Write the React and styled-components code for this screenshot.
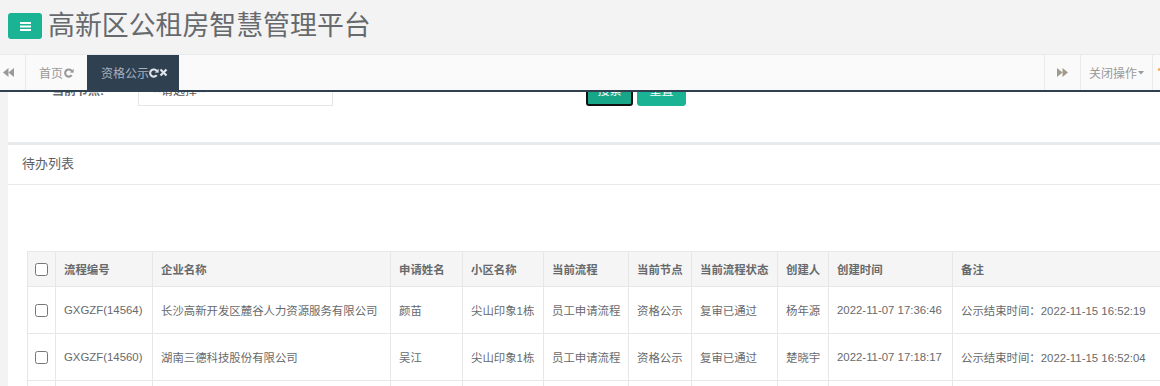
import React, { useLayoutEffect, useRef } from "react";
import styled, { createGlobalStyle } from "styled-components";

const GlobalStyle = createGlobalStyle`
  html, body { margin: 0; padding: 0; height: 100%; }
  body {
    background: #f3f3f4;
    font-family: "Liberation Sans", "Noto Sans CJK SC", sans-serif;
    color: #676a6c;
    overflow: hidden;
  }
  #root { height: 100%; }
  * { box-sizing: border-box; }
`;

const columns = [
  { key: "check", title: "", width: 28 },
  { key: "no", title: "流程编号", width: 97 },
  { key: "company", title: "企业名称", width: 238 },
  { key: "name", title: "申请姓名", width: 72 },
  { key: "estate", title: "小区名称", width: 81 },
  { key: "flow", title: "当前流程", width: 85 },
  { key: "node", title: "当前节点", width: 63 },
  { key: "status", title: "当前流程状态", width: 86 },
  { key: "creator", title: "创建人", width: 51 },
  { key: "time", title: "创建时间", width: 124 },
  { key: "memo", title: "备注", width: 240 },
];

const tableWidth = columns.reduce((sum, c) => sum + c.width, 0);

const rows = [
  {
    no: "GXGZF(14564)",
    company: "长沙高新开发区麓谷人力资源服务有限公司",
    name: "颜苗",
    estate: "尖山印象1栋",
    flow: "员工申请流程",
    node: "资格公示",
    status: "复审已通过",
    creator: "杨年源",
    time: "2022-11-07 17:36:46",
    memo: "公示结束时间：2022-11-15 16:52:19",
  },
  {
    no: "GXGZF(14560)",
    company: "湖南三德科技股份有限公司",
    name: "吴江",
    estate: "尖山印象1栋",
    flow: "员工申请流程",
    node: "资格公示",
    status: "复审已通过",
    creator: "楚晓宇",
    time: "2022-11-07 17:18:17",
    memo: "公示结束时间：2022-11-15 16:52:04",
  },
  {
    no: "", company: "", name: "", estate: "", flow: "", node: "", status: "", creator: "", time: "", memo: "",
  },
];

/* icons */
const Bars = () => (
  <svg width="11" height="9" viewBox="0 0 11 9">
    <rect x="0" y="0" width="11" height="2" fill="#fff" />
    <rect x="0" y="3.5" width="11" height="2" fill="#fff" />
    <rect x="0" y="7" width="11" height="2" fill="#fff" />
  </svg>
);

const Backward = () => (
  <svg width="11" height="9" viewBox="0 0 11 9">
    <polygon points="5.5,0 5.5,9 0,4.5" fill="#999" />
    <polygon points="11,0 11,9 5.5,4.5" fill="#999" />
  </svg>
);

const Forward = () => (
  <svg width="11" height="9" viewBox="0 0 11 9">
    <polygon points="0,0 0,9 5.5,4.5" fill="#a39a8e" />
    <polygon points="5.5,0 5.5,9 11,4.5" fill="#a39a8e" />
  </svg>
);

const Refresh = ({ color }) => (
  <svg width="10" height="10" viewBox="0 0 10 10">
    <path d="M7.7 3 A3.6 3.6 0 1 0 7.7 7.1" fill="none" stroke={color} strokeWidth="2.1" />
    <polygon points="9.6,0.8 9.6,4.8 5.8,4.4" fill={color} />
  </svg>
);

const Close = ({ color }) => (
  <svg width="9" height="9" viewBox="0 0 9 9">
    <path d="M1.5 1.5 L7.5 7.5 M7.5 1.5 L1.5 7.5" stroke={color} strokeWidth="2.3" />
  </svg>
);

const Caret = ({ color }) => (
  <svg width="6" height="4" viewBox="0 0 6 4">
    <polygon points="0,0 6,0 3,3.5" fill={color} />
  </svg>
);

/* layout */
const Shell = styled.div`
  height: 100vh;
  display: flex;
  flex-direction: column;
`;

const TopBar = styled.header`
  height: 54px;
  flex-shrink: 0;
  display: flex;
  align-items: center;
  gap: 6px;
  padding: 0 8px 2px;
`;

const MenuButton = styled.button`
  width: 34px;
  height: 26px;
  border: none;
  border-radius: 3px;
  background: #1ab394;
  display: flex;
  align-items: center;
  justify-content: center;
  padding: 0;
`;

const Title = styled.h1`
  margin: 0 0 3px;
  font-size: 26.9px;
  font-weight: normal;
  line-height: 1;
  color: #676a6c;
  font-family: "Noto Sans CJK SC", sans-serif;
`;

const TabBar = styled.nav`
  height: 38px;
  flex-shrink: 0;
  display: flex;
  background: #fafafa;
  border-top: 1px solid #e7eaec;
  border-bottom: 2px solid #2f4050;
  font-size: 12px;
  overflow: hidden;
`;

const NavButton = styled.div`
  width: ${(p) => p.$w}px;
  flex-shrink: 0;
  display: flex;
  align-items: center;
  justify-content: ${(p) => (p.$left ? "flex-start" : "center")};
  padding-left: ${(p) => p.$pad || 0}px;
  border-${(p) => (p.$side === "right" ? "right" : "left")}: 1px solid #eaeaea;
  color: #999;
  gap: 1px;
  overflow: hidden;
  white-space: nowrap;
`;

const TabList = styled.div`
  flex: 1;
  display: flex;
  min-width: 0;
`;

const Tab = styled.div`
  display: flex;
  align-items: center;
  gap: ${(p) => (p.$active ? 0 : 1)}px;
  padding: ${(p) => (p.$active ? "0 11px 0 14px" : "0 13px")};
  background: ${(p) => (p.$active ? "#2f4050" : "transparent")};
  color: ${(p) => (p.$active ? "#a7b1c2" : "#999")};
  white-space: nowrap;
`;

const Frame = styled.main`
  flex: 1;
  overflow: hidden;
`;

const Page = styled.div`
  padding-left: 8px;
  width: 1260px;
`;

const FilterBox = styled.section`
  background: #fff;
  padding: 20px 0 36px;
  display: flex;
  align-items: center;
  font-size: 12px;
`;

const FieldLabel = styled.label`
  width: 130px;
  padding-left: 44px;
  font-weight: 600;
  color: #676a6c;
`;

const SelectBox = styled.div`
  width: 195px;
  height: 34px;
  border: 1px solid #e5e6e7;
  display: flex;
  align-items: center;
  justify-content: space-between;
  padding: 0 7px 0 14px;
  color: #555;
  margin-right: 253px;
`;

const Button = styled.button`
  height: 34px;
  padding: 0 ${(p) => (p.$focus ? 9.5 : 11.5)}px;
  margin-right: 4px;
  border-radius: 3px;
  background: ${(p) => (p.$focus ? "#18a689" : "#1ab394")};
  border: ${(p) => (p.$focus ? "2px solid #111" : "1px solid #1ab394")};
  color: #fff;
  font-size: 12px;
  font-family: inherit;
`;

const ListBox = styled.section`
  background: #fff;
  border-top: 3px solid #e7eaec;
`;

const ListHead = styled.div`
  height: 40px;
  border-bottom: 1px solid #e7eaec;
  display: flex;
  align-items: center;
  padding: 0 14px 4px;
`;

const ListTitle = styled.h5`
  margin: 0;
  font-size: 13px;
  font-weight: normal;
  color: #5e6062;
`;

const ListBody = styled.div`
  padding: 66px 0 0 19px;
`;

const Table = styled.table`
  width: ${tableWidth}px;
  border-collapse: collapse;
  table-layout: fixed;
  font-size: 11.4px;
  color: #676a6c;
`;

const HeadRow = styled.tr`
  height: 35px;
  background: #f5f5f6;
`;

const BodyRow = styled.tr`
  height: 47px;
  background: #fff;
`;

const Th = styled.th`
  border: 1px solid #e7e7e7;
  padding: 0 ${(p) => (p.$center ? 0 : 8)}px;
  text-align: ${(p) => (p.$center ? "center" : "left")};
  font-weight: 600;
  white-space: nowrap;
  overflow: hidden;
`;

const Td = styled.td`
  border: 1px solid #e7e7e7;
  padding: 0 ${(p) => (p.$center ? 0 : 8)}px;
  text-align: ${(p) => (p.$center ? "center" : "left")};
  white-space: nowrap;
  overflow: hidden;
`;

const Check = styled.input.attrs({ type: "checkbox" })`
  margin: 0;
  width: 13px;
  height: 13px;
  vertical-align: middle;
`;

const ExitIcon = styled.span`
  display: block;
  width: 6px;
  height: 3px;
  margin-top: -6px;
  background: #f8ac59;
  border-radius: 1px;
`;

export default function App() {
  const frameRef = useRef(null);

  useLayoutEffect(() => {
    if (frameRef.current) frameRef.current.scrollTop = 40;
  }, []);

  return (
    <Shell>
      <GlobalStyle />
      <TopBar>
        <MenuButton>
          <Bars />
        </MenuButton>
        <Title>高新区公租房智慧管理平台</Title>
      </TopBar>

      <TabBar>
        <NavButton $w={26} $side="right" $left $pad={3}>
          <Backward />
        </NavButton>
        <TabList>
          <Tab>
            首页
            <Refresh color="#999" />
          </Tab>
          <Tab $active>
            资格公示
            <Refresh color="#dfe4ea" />
            <Close color="#dfe4ea" />
          </Tab>
        </TabList>
        <NavButton $w={36}>
          <Forward />
        </NavButton>
        <NavButton $w={72}>
          关闭操作
          <Caret color="#999" />
        </NavButton>
        <NavButton $w={8} $left $pad={5}>
          <ExitIcon />
        </NavButton>
      </TabBar>

      <Frame ref={frameRef}>
        <Page>
          <FilterBox>
            <FieldLabel>当前节点:</FieldLabel>
            <SelectBox>
              <span>--请选择--</span>
              <Caret color="#555" />
            </SelectBox>
            <Button $focus>搜索</Button>
            <Button>重置</Button>
          </FilterBox>

          <ListBox>
            <ListHead>
              <ListTitle>待办列表</ListTitle>
            </ListHead>
            <ListBody>
              <Table>
                <colgroup>
                  {columns.map((c) => (
                    <col key={c.key} style={{ width: c.width }} />
                  ))}
                </colgroup>
                <thead>
                  <HeadRow>
                    {columns.map((c) =>
                      c.key === "check" ? (
                        <Th key={c.key} $center>
                          <Check />
                        </Th>
                      ) : (
                        <Th key={c.key}>{c.title}</Th>
                      )
                    )}
                  </HeadRow>
                </thead>
                <tbody>
                  {rows.map((r, i) => (
                    <BodyRow key={i}>
                      {columns.map((c) =>
                        c.key === "check" ? (
                          <Td key={c.key} $center>
                            {r.no && <Check />}
                          </Td>
                        ) : (
                          <Td key={c.key}>{r[c.key]}</Td>
                        )
                      )}
                    </BodyRow>
                  ))}
                </tbody>
              </Table>
            </ListBody>
          </ListBox>
        </Page>
      </Frame>
    </Shell>
  );
}
